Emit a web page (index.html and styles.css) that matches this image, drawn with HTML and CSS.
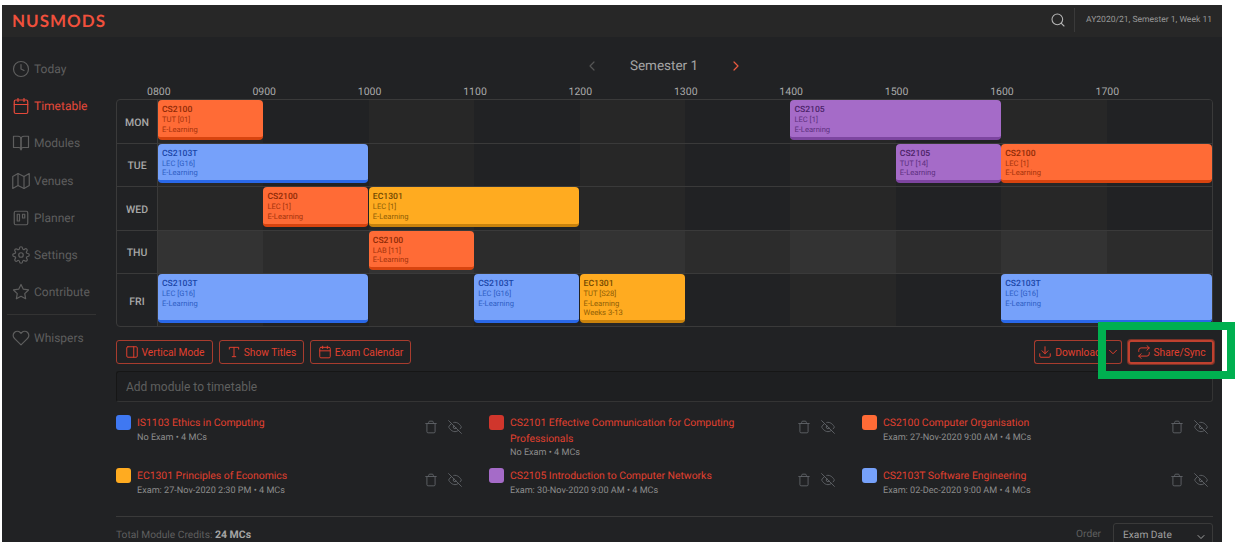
FILE: index.html
```html
<!DOCTYPE html>
<html lang="en">

<head>
  <meta charset="UTF-8">
  <meta name="viewport" content="width=device-width, initial-scale=1.0">
  <title>Timetable - NUSMods</title>
  <link rel="stylesheet" href="styles.css">
</head>

<body>
  <svg class="icon-defs" width="0" height="0">
    <defs>
      <symbol id="i-clock" viewBox="0 0 24 24"><circle cx="12" cy="12" r="10"/><polyline points="12 6 12 12 16 14"/></symbol>
      <symbol id="i-calendar" viewBox="0 0 24 24"><rect x="3" y="4" width="18" height="18" rx="2"/><line x1="16" y1="2" x2="16" y2="6"/><line x1="8" y1="2" x2="8" y2="6"/><line x1="3" y1="10" x2="21" y2="10"/></symbol>
      <symbol id="i-book" viewBox="0 0 24 24"><path d="M2 3h6a4 4 0 0 1 4 4v14a3 3 0 0 0-3-3H2z"/><path d="M22 3h-6a4 4 0 0 0-4 4v14a3 3 0 0 1 3-3h7z"/></symbol>
      <symbol id="i-map" viewBox="0 0 24 24"><polygon points="1 6 1 22 8 18 16 22 23 18 23 2 16 6 8 2 1 6"/><line x1="8" y1="2" x2="8" y2="18"/><line x1="16" y1="6" x2="16" y2="22"/></symbol>
      <symbol id="i-trello" viewBox="0 0 24 24"><rect x="3" y="3" width="18" height="18" rx="2"/><rect x="7" y="7" width="3" height="9"/><rect x="14" y="7" width="3" height="5"/></symbol>
      <symbol id="i-settings" viewBox="0 0 24 24"><circle cx="12" cy="12" r="3"/><path d="M19.4 15a1.65 1.65 0 0 0 .33 1.82l.06.06a2 2 0 0 1 0 2.83 2 2 0 0 1-2.83 0l-.06-.06a1.65 1.65 0 0 0-1.82-.33 1.65 1.65 0 0 0-1 1.51V21a2 2 0 0 1-2 2 2 2 0 0 1-2-2v-.09A1.65 1.65 0 0 0 9 19.4a1.65 1.65 0 0 0-1.82.33l-.06.06a2 2 0 0 1-2.83 0 2 2 0 0 1 0-2.83l.06-.06a1.65 1.65 0 0 0 .33-1.82 1.65 1.65 0 0 0-1.51-1H3a2 2 0 0 1-2-2 2 2 0 0 1 2-2h.09A1.65 1.65 0 0 0 4.6 9a1.65 1.65 0 0 0-.33-1.82l-.06-.06a2 2 0 0 1 0-2.83 2 2 0 0 1 2.83 0l.06.06a1.65 1.65 0 0 0 1.82.33H9a1.65 1.65 0 0 0 1-1.51V3a2 2 0 0 1 2-2 2 2 0 0 1 2 2v.09a1.65 1.65 0 0 0 1 1.51 1.65 1.65 0 0 0 1.82-.33l.06-.06a2 2 0 0 1 2.83 0 2 2 0 0 1 0 2.83l-.06.06a1.65 1.65 0 0 0-.33 1.82V9a1.65 1.65 0 0 0 1.51 1H21a2 2 0 0 1 2 2 2 2 0 0 1-2 2h-.09a1.65 1.65 0 0 0-1.51 1z"/></symbol>
      <symbol id="i-star" viewBox="0 0 24 24"><polygon points="12 2 15.09 8.26 22 9.27 17 14.14 18.18 21.02 12 17.77 5.82 21.02 7 14.14 2 9.27 8.91 8.26 12 2"/></symbol>
      <symbol id="i-heart" viewBox="0 0 24 24"><path d="M20.84 4.61a5.5 5.5 0 0 0-7.78 0L12 5.67l-1.06-1.06a5.5 5.5 0 0 0-7.78 7.78l1.06 1.06L12 21.23l7.78-7.78 1.06-1.06a5.5 5.5 0 0 0 0-7.78z"/></symbol>
      <symbol id="i-search" viewBox="0 0 24 24"><circle cx="11" cy="11" r="8"/><line x1="21" y1="21" x2="16.65" y2="16.65"/></symbol>
      <symbol id="i-left" viewBox="0 0 24 24"><polyline points="15 18 9 12 15 6"/></symbol>
      <symbol id="i-right" viewBox="0 0 24 24"><polyline points="9 18 15 12 9 6"/></symbol>
      <symbol id="i-down" viewBox="0 0 24 24"><polyline points="6 9 12 15 18 9"/></symbol>
      <symbol id="i-sidebar" viewBox="0 0 24 24"><rect x="3" y="3" width="18" height="18" rx="2"/><line x1="15" y1="3" x2="15" y2="21"/></symbol>
      <symbol id="i-type" viewBox="0 0 24 24"><polyline points="4 7 4 4 20 4 20 7"/><line x1="9" y1="20" x2="15" y2="20"/><line x1="12" y1="4" x2="12" y2="20"/></symbol>
      <symbol id="i-download" viewBox="0 0 24 24"><path d="M21 15v4a2 2 0 0 1-2 2H5a2 2 0 0 1-2-2v-4"/><polyline points="7 10 12 15 17 10"/><line x1="12" y1="15" x2="12" y2="3"/></symbol>
      <symbol id="i-repeat" viewBox="0 0 24 24"><polyline points="17 1 21 5 17 9"/><path d="M3 11V9a4 4 0 0 1 4-4h14"/><polyline points="7 23 3 19 7 15"/><path d="M21 13v2a4 4 0 0 1-4 4H3"/></symbol>
      <symbol id="i-trash" viewBox="0 0 24 24"><polyline points="3 6 5 6 21 6"/><path d="M19 6v14a2 2 0 0 1-2 2H7a2 2 0 0 1-2-2V6m3 0V4a2 2 0 0 1 2-2h4a2 2 0 0 1 2 2v2"/></symbol>
      <symbol id="i-eye-off" viewBox="0 0 24 24"><path d="M17.94 17.94A10.07 10.07 0 0 1 12 20c-7 0-11-8-11-8a18.45 18.45 0 0 1 5.06-5.94M9.9 4.24A9.12 9.12 0 0 1 12 4c7 0 11 8 11 8a18.5 18.5 0 0 1-2.16 3.19m-6.72-1.07a3 3 0 1 1-4.24-4.24"/><line x1="1" y1="1" x2="23" y2="23"/></symbol>
    </defs>
  </svg>

  <div id="app">
    <header class="topbar">
      <div class="logo">NUSMODS</div>
      <div class="topbar-right">
        <svg class="icon search-icon"><use href="#i-search"/></svg>
        <div class="week-info">AY2020/21, Semester 1, Week 11</div>
      </div>
    </header>

    <div class="main">
      <nav class="sidebar">
        <a class="nav-link"><svg class="icon"><use href="#i-clock"/></svg>Today</a>
        <a class="nav-link active"><svg class="icon"><use href="#i-calendar"/></svg>Timetable</a>
        <a class="nav-link"><svg class="icon"><use href="#i-book"/></svg>Modules</a>
        <a class="nav-link"><svg class="icon"><use href="#i-map"/></svg>Venues</a>
        <a class="nav-link"><svg class="icon"><use href="#i-trello"/></svg>Planner</a>
        <a class="nav-link"><svg class="icon"><use href="#i-settings"/></svg>Settings</a>
        <a class="nav-link"><svg class="icon"><use href="#i-star"/></svg>Contribute</a>
        <div class="nav-divider"></div>
        <a class="nav-link"><svg class="icon"><use href="#i-heart"/></svg>Whispers</a>
      </nav>

      <section class="content">
        <div class="sem-switch">
          <svg class="icon sem-prev"><use href="#i-left"/></svg>
          <span class="sem-name">Semester 1</span>
          <svg class="icon sem-next"><use href="#i-right"/></svg>
        </div>

        <div class="hours">
          <span>0800</span><span>0900</span><span>1000</span><span>1100</span><span>1200</span>
          <span>1300</span><span>1400</span><span>1500</span><span>1600</span><span>1700</span>
        </div>

        <div class="timetable">
          <div class="tt-row">
            <div class="tt-day">MON</div>
            <div class="tt-track">
              <div class="event orange" style="grid-column: 1 / 3"><b>CS2100</b><span>TUT [01]</span><span>E-Learning</span></div>
              <div class="event purple" style="grid-column: 13 / 17"><b>CS2105</b><span>LEC [1]</span><span>E-Learning</span></div>
            </div>
          </div>
          <div class="tt-row">
            <div class="tt-day">TUE</div>
            <div class="tt-track">
              <div class="event blue" style="grid-column: 1 / 5"><b>CS2103T</b><span>LEC [G16]</span><span>E-Learning</span></div>
              <div class="event purple" style="grid-column: 15 / 17"><b>CS2105</b><span>TUT [14]</span><span>E-Learning</span></div>
              <div class="event orange" style="grid-column: 17 / 21"><b>CS2100</b><span>LEC [1]</span><span>E-Learning</span></div>
            </div>
          </div>
          <div class="tt-row">
            <div class="tt-day">WED</div>
            <div class="tt-track">
              <div class="event orange" style="grid-column: 3 / 5"><b>CS2100</b><span>LEC [1]</span><span>E-Learning</span></div>
              <div class="event yellow" style="grid-column: 5 / 9"><b>EC1301</b><span>LEC [1]</span><span>E-Learning</span></div>
            </div>
          </div>
          <div class="tt-row today">
            <div class="tt-day">THU</div>
            <div class="tt-track">
              <div class="event orange" style="grid-column: 5 / 7"><b>CS2100</b><span>LAB [11]</span><span>E-Learning</span></div>
            </div>
          </div>
          <div class="tt-row tall">
            <div class="tt-day">FRI</div>
            <div class="tt-track">
              <div class="event blue" style="grid-column: 1 / 5"><b>CS2103T</b><span>LEC [G16]</span><span>E-Learning</span></div>
              <div class="event blue" style="grid-column: 7 / 9"><b>CS2103T</b><span>LEC [G16]</span><span>E-Learning</span></div>
              <div class="event yellow" style="grid-column: 9 / 11"><b>EC1301</b><span>TUT [S28]</span><span>E-Learning</span><span>Weeks 3-13</span></div>
              <div class="event blue" style="grid-column: 17 / 21"><b>CS2103T</b><span>LEC [G16]</span><span>E-Learning</span></div>
            </div>
          </div>
        </div>

        <div class="toolbar">
          <button class="btn btn-vertical"><svg class="icon"><use href="#i-sidebar"/></svg>Vertical Mode</button>
          <button class="btn btn-titles"><svg class="icon"><use href="#i-type"/></svg>Show Titles</button>
          <button class="btn btn-exam"><svg class="icon"><use href="#i-calendar"/></svg>Exam Calendar</button>
          <div class="btn-split">
            <button class="btn btn-download"><svg class="icon"><use href="#i-download"/></svg>Download</button>
            <button class="btn btn-caret"><svg class="icon"><use href="#i-down"/></svg></button>
          </div>
          <button class="btn btn-share"><svg class="icon"><use href="#i-repeat"/></svg>Share/Sync</button>
        </div>

        <input class="add-module" type="text" placeholder="Add module to timetable">

        <div class="modules">
          <div class="module">
            <i class="swatch c-royal"></i>
            <div class="module-info"><a>IS1103 Ethics in Computing</a><p>No Exam • 4 MCs</p></div>
            <div class="module-actions"><svg class="icon"><use href="#i-trash"/></svg><svg class="icon"><use href="#i-eye-off"/></svg></div>
          </div>
          <div class="module">
            <i class="swatch c-red"></i>
            <div class="module-info"><a>CS2101 Effective Communication for Computing Professionals</a><p>No Exam • 4 MCs</p></div>
            <div class="module-actions"><svg class="icon"><use href="#i-trash"/></svg><svg class="icon"><use href="#i-eye-off"/></svg></div>
          </div>
          <div class="module">
            <i class="swatch orange"></i>
            <div class="module-info"><a>CS2100 Computer Organisation</a><p>Exam: 27-Nov-2020 9:00 AM • 4 MCs</p></div>
            <div class="module-actions"><svg class="icon"><use href="#i-trash"/></svg><svg class="icon"><use href="#i-eye-off"/></svg></div>
          </div>
          <div class="module">
            <i class="swatch yellow"></i>
            <div class="module-info"><a>EC1301 Principles of Economics</a><p>Exam: 27-Nov-2020 2:30 PM • 4 MCs</p></div>
            <div class="module-actions"><svg class="icon"><use href="#i-trash"/></svg><svg class="icon"><use href="#i-eye-off"/></svg></div>
          </div>
          <div class="module">
            <i class="swatch purple"></i>
            <div class="module-info"><a>CS2105 Introduction to Computer Networks</a><p>Exam: 30-Nov-2020 9:00 AM • 4 MCs</p></div>
            <div class="module-actions"><svg class="icon"><use href="#i-trash"/></svg><svg class="icon"><use href="#i-eye-off"/></svg></div>
          </div>
          <div class="module">
            <i class="swatch blue"></i>
            <div class="module-info"><a>CS2103T Software Engineering</a><p>Exam: 02-Dec-2020 9:00 AM • 4 MCs</p></div>
            <div class="module-actions"><svg class="icon"><use href="#i-trash"/></svg><svg class="icon"><use href="#i-eye-off"/></svg></div>
          </div>
        </div>

        <div class="footer-row">
          <div class="credits">Total Module Credits: <b>24 MCs</b></div>
          <div class="order">
            <span>Order</span>
            <div class="order-select">Exam Date<svg class="icon"><use href="#i-down"/></svg></div>
          </div>
        </div>
      </section>
    </div>
  </div>

  <div class="highlight"></div>
</body>

</html>
```

FILE: styles.css
```css
* {
  box-sizing: border-box;
}

body {
  margin: 0;
  height: 549px;
  overflow: hidden;
  background: #fff;
  font-family: "Roboto", "Noto Sans", sans-serif;
  text-rendering: geometricPrecision;
  position: relative;
}

.icon-defs {
  position: absolute;
}

.icon {
  width: 18px;
  height: 18px;
  fill: none;
  stroke: currentColor;
  stroke-width: 2;
  stroke-linecap: round;
  stroke-linejoin: round;
  flex: none;
}

#app {
  margin: 5px 0 0 2px;
  width: 1220px;
  height: 537px;
  overflow: hidden;
  background: #212224;
  color: #aaa;
}

/* top bar */
.topbar {
  height: 32px;
  background: #272727;
  display: flex;
  align-items: center;
  justify-content: space-between;
  padding: 0 0 2px 10px;
}

.logo {
  font-family: "Lato", sans-serif;
  font-size: 17px;
  font-weight: 700;
  letter-spacing: 1px;
  color: #f0503c;
}

.topbar-right {
  display: flex;
  align-items: center;
  height: 100%;
}

.search-icon {
  width: 16px;
  height: 16px;
  color: #b5b5b5;
  stroke-width: 1.6;
  margin-right: 8px;
}

.week-info {
  height: 24px;
  line-height: 24px;
  padding: 0 10px 0 11px;
  border-left: 1px solid #3a3a3a;
  font-size: 8.55px;
  color: #999;
}

/* sidebar */
.main {
  display: flex;
}

.sidebar {
  width: 114px;
  flex: none;
  padding: 13px 0 0 10px;
}

.nav-link {
  display: flex;
  align-items: center;
  gap: 4px;
  height: 37.3px;
  font-size: 12px;
  color: #5e5e5e;
}

.nav-link .icon {
  width: 18px;
  height: 18px;
  stroke-width: 1.6;
}

.nav-link.active {
  color: #e5493a;
}

.nav-divider {
  width: 89px;
  margin: 3px 0 4px -5px;
  border-top: 1px solid #333;
}

/* semester switch */
.content {
  width: 1097px;
}

.sem-switch {
  display: flex;
  align-items: center;
  justify-content: center;
  gap: 30px;
  height: 24px;
  margin: 17px 0 0 -1px;
}

.sem-name {
  font-size: 13.5px;
  color: #a5a5a5;
}

.sem-switch .icon {
  width: 16px;
  height: 16px;
  stroke-width: 1.8;
}

.sem-prev {
  color: #555;
}

.sem-next {
  color: #ea5a3f;
}

/* timetable */
.hours {
  display: flex;
  height: 18px;
  padding: 3px 0 0 31px;
  margin-top: 3px;
  align-items: center;
  font-size: 10.5px;
  color: #aaa;
}

.hours span {
  width: 105.4px;
  flex: none;
}

.timetable {
  height: 228px;
  border: 1px solid #3a3a3a;
  border-radius: 4px;
  overflow: hidden;
}

.tt-row {
  display: flex;
  height: 43.5px;
  border-bottom: 1px solid #3a3a3a;
}

.tt-row.tall {
  height: 52px;
  border-bottom: 0;
}

.tt-day {
  width: 41px;
  flex: none;
  display: flex;
  align-items: center;
  justify-content: center;
  border-right: 1px solid #3a3a3a;
  font-size: 10.5px;
  font-weight: 500;
  color: #a8a8a8;
  padding-top: 2px;
}

.tt-track {
  flex: 1;
  display: grid;
  grid-template-columns: repeat(20, 1fr);
  grid-template-rows: 1fr;
  background: repeating-linear-gradient(90deg, #272727 0 105.4px, #212224 105.4px 210.8px);
}

.tt-row.today .tt-track {
  background: repeating-linear-gradient(90deg, #333 0 105.4px, #2c2c2c 105.4px 210.8px);
}

.event {
  grid-row: 1;
  margin: 0 0.5px 3px 0;
  padding: 5px 3px 0 4px;
  border-radius: 4px;
  border-bottom: 3px solid;
  display: flex;
  flex-direction: column;
  font-size: 7.6px;
  line-height: 9.7px;
}

.event b {
  font-size: 8.6px;
  font-weight: 500;
  line-height: 10px;
}

.event.orange {
  background: #ff6b36;
  border-color: #d8440f;
  color: #a5330c;
}

.event.orange b {
  color: #8e2a06;
}

.event.blue {
  background: #76a1fa;
  border-color: #2a68e8;
  color: #2f5fc4;
}

.event.blue b {
  color: #1a46a8;
}

.event.purple {
  background: #a56bc8;
  border-color: #7d45a0;
  color: #5e3080;
}

.event.purple b {
  color: #4c2369;
}

.event.yellow {
  background: #ffab20;
  border-color: #c9820c;
  color: #8f5e06;
}

.event.yellow b {
  color: #714800;
}

/* buttons */
.toolbar {
  display: flex;
  align-items: center;
  gap: 6px;
  margin-top: 13px;
  height: 24px;
}

.btn {
  height: 24px;
  padding: 0;
  display: flex;
  align-items: center;
  justify-content: center;
  gap: 3px;
  background: transparent;
  border: 1px solid #a83c2e;
  border-radius: 3px;
  color: #e0402f;
  font-family: inherit;
  font-size: 10.2px;
}

.btn .icon {
  width: 14px;
  height: 14px;
  stroke-width: 1.7;
}

.btn-vertical {
  width: 97px;
}

.btn-titles {
  width: 85px;
}

.btn-exam {
  width: 101px;
}

.btn-split {
  display: flex;
  margin-left: auto;
}

.btn-download {
  width: 70px;
  border-right: 0;
  border-radius: 3px 0 0 3px;
}

.btn-caret {
  width: 18px;
  border-left: 0;
  border-radius: 0 3px 3px 0;
}

.btn-share {
  width: 86px;
  margin-right: -1px;
  border: 2px solid #bf412f;
  box-shadow: 0 0 0 1px #7a3328;
}

/* add module */
.add-module {
  display: block;
  width: 100%;
  height: 31px;
  margin-top: 7px;
  padding: 0 9px;
  background: #1e1f21;
  border: 1px solid #343434;
  border-top-color: #161616;
  border-left-color: #161616;
  border-radius: 3px;
  font-family: inherit;
  font-size: 12px;
  color: #aaa;
}

.add-module::placeholder {
  color: #5f5f5f;
}

/* module list */
.modules {
  display: grid;
  grid-template-columns: repeat(3, 351px);
  column-gap: 22px;
  grid-auto-rows: 53px;
  margin-top: 13px;
}

.module {
  display: flex;
  align-items: flex-start;
}

.swatch {
  width: 15px;
  height: 15px;
  flex: none;
  border-radius: 3px;
  margin-right: 6px;
}

.swatch.orange {
  background: #ff6b36;
}

.swatch.blue {
  background: #76a1fa;
}

.swatch.purple {
  background: #a56bc8;
}

.swatch.yellow {
  background: #ffab20;
}

.c-royal {
  background: #3f78f2;
}

.c-red {
  background: #d0362c;
}

.module-info {
  flex: 1;
  min-width: 0;
  padding-right: 30px;
}

.module-info a {
  display: block;
  font-size: 10.4px;
  line-height: 15.5px;
  color: #e0402f;
}

.module-info p {
  margin: 0;
  font-size: 9.1px;
  line-height: 14px;
  color: #8c8c8c;
}

.module-actions {
  display: flex;
  gap: 10px;
  padding-top: 5px;
  width: 38px;
  margin-right: 5px;
  flex: none;
  color: #5f6266;
}

.module-actions .icon {
  width: 14px;
  height: 14px;
  stroke-width: 1.6;
}

/* footer */
.footer-row {
  display: flex;
  justify-content: space-between;
  border-top: 1px solid #3a3a3a;
  margin-top: -5px;
  padding-top: 6px;
  font-size: 10.2px;
}

.credits {
  padding-top: 5px;
  color: #5f5f5f;
}

.credits b {
  color: #a5a5a5;
  font-size: 10.5px;
  font-weight: 700;
}

.order {
  display: flex;
  gap: 12px;
  color: #5f5f5f;
}

.order > span {
  padding-top: 6px;
}

.order-select {
  width: 100px;
  height: 24px;
  padding: 6px 5px 0 9px;
  display: flex;
  justify-content: space-between;
  border: 1px solid #3a3a3a;
  border-radius: 3px;
  color: #a0a0a0;
}

.order-select .icon {
  width: 12px;
  height: 12px;
  margin-top: 1px;
}

/* green marker drawn over the screenshot */
.highlight {
  position: absolute;
  left: 1098px;
  top: 322px;
  width: 137px;
  height: 57px;
  border: 8px solid #00b050;
}
```
